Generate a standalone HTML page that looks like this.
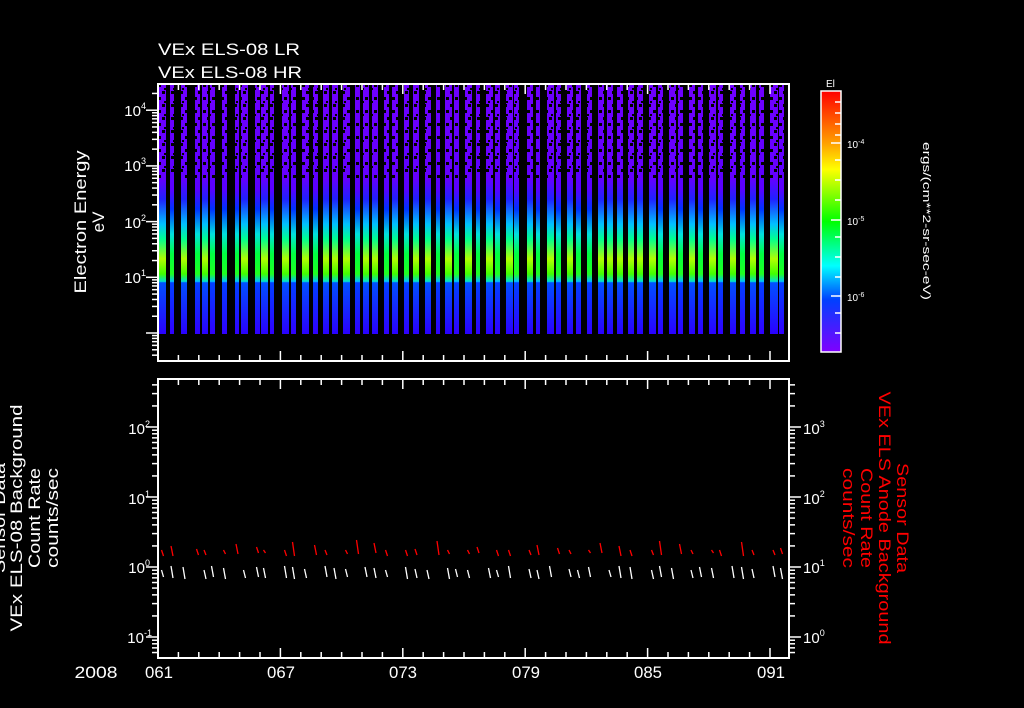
<!DOCTYPE html>
<html><head><meta charset="utf-8"><style>
html,body{margin:0;padding:0;background:#000;}
svg{display:block;}
text{font-family:"Liberation Sans",sans-serif;fill:#fff;}
</style></head><body>
<svg id="s" width="1024" height="708" viewBox="0 0 1024 708" xmlns="http://www.w3.org/2000/svg">
<defs>
<linearGradient id="gA" gradientUnits="userSpaceOnUse" x1="0" y1="84" x2="0" y2="334">
<stop offset="0" stop-color="#7000ff"/><stop offset="0.38" stop-color="#6400ff"/>
<stop offset="0.46" stop-color="#2020ff"/><stop offset="0.56" stop-color="#00c0ff"/>
<stop offset="0.62" stop-color="#00ff90"/><stop offset="0.70" stop-color="#b0ff00"/>
<stop offset="0.76" stop-color="#40ff00"/><stop offset="0.79" stop-color="#00e0d0"/>
<stop offset="0.795" stop-color="#0050ff"/><stop offset="1" stop-color="#2a00ff"/>
</linearGradient>
<linearGradient id="gB" gradientUnits="userSpaceOnUse" x1="0" y1="84" x2="0" y2="334">
<stop offset="0" stop-color="#7000ff"/><stop offset="0.42" stop-color="#5a00ff"/>
<stop offset="0.50" stop-color="#0030ff"/><stop offset="0.60" stop-color="#00e0e0"/>
<stop offset="0.68" stop-color="#00ff40"/><stop offset="0.76" stop-color="#20ff20"/>
<stop offset="0.79" stop-color="#00c0ff"/><stop offset="0.795" stop-color="#0040ff"/>
<stop offset="1" stop-color="#3000ff"/>
</linearGradient>
<linearGradient id="cb" x1="0" y1="0" x2="0" y2="1">
<stop offset="0" stop-color="#ff0000"/><stop offset="0.2" stop-color="#ffa000"/>
<stop offset="0.3" stop-color="#ffff00"/><stop offset="0.5" stop-color="#00ff00"/>
<stop offset="0.67" stop-color="#00ffff"/><stop offset="0.8" stop-color="#0040ff"/>
<stop offset="1" stop-color="#8000ff"/>
</linearGradient>
<pattern id="spk" width="9" height="13" patternUnits="userSpaceOnUse">
<rect x="0" y="0" width="3" height="3" fill="#000"/><rect x="5" y="6" width="3" height="3" fill="#000"/><rect x="2" y="10" width="2" height="2" fill="#000"/>
</pattern>
</defs>
<g id="stripes"></g>
<rect x="158" y="84" width="631" height="95" fill="url(#spk)"/>
<g fill="none" stroke="#fff" stroke-width="2">
<rect x="158" y="84" width="631" height="277"/>
<rect x="158" y="379" width="631" height="279"/>
<rect x="821" y="91" width="20" height="261" fill="url(#cb)" stroke-width="1.5"/>
</g>
<g id="ticks" stroke="#fff" stroke-width="1.5"></g>
<g id="segs" stroke-width="1.3" fill="none"></g>

<text x="158" y="55" font-size="17" textLength="142" lengthAdjust="spacingAndGlyphs">VEx ELS-08 LR</text>
<text x="158" y="78" font-size="17" textLength="144" lengthAdjust="spacingAndGlyphs">VEx ELS-08 HR</text>

<g font-size="15" text-anchor="end">
<text x="146" y="116">10<tspan font-size="9" dy="-7">4</tspan></text>
<text x="146" y="171">10<tspan font-size="9" dy="-7">3</tspan></text>
<text x="146" y="228">10<tspan font-size="9" dy="-7">2</tspan></text>
<text x="146" y="283">10<tspan font-size="9" dy="-7">1</tspan></text>
<text x="150" y="434">10<tspan font-size="9" dy="-7">2</tspan></text>
<text x="150" y="504">10<tspan font-size="9" dy="-7">1</tspan></text>
<text x="150" y="573">10<tspan font-size="9" dy="-7">0</tspan></text>
<text x="152" y="643">10<tspan font-size="9" dy="-7">-1</tspan></text>
</g>
<g font-size="15">
<text x="803" y="434">10<tspan font-size="9" dy="-7">3</tspan></text>
<text x="803" y="504">10<tspan font-size="9" dy="-7">2</tspan></text>
<text x="803" y="573">10<tspan font-size="9" dy="-7">1</tspan></text>
<text x="803" y="643">10<tspan font-size="9" dy="-7">0</tspan></text>
</g>
<g font-size="10">
<text x="847" y="148">10<tspan font-size="7" dy="-4">-4</tspan></text>
<text x="847" y="225">10<tspan font-size="7" dy="-4">-5</tspan></text>
<text x="847" y="301">10<tspan font-size="7" dy="-4">-6</tspan></text>
<text x="826" y="87">El</text>
</g>
<text transform="translate(923,221) rotate(90)" font-size="11" text-anchor="middle" textLength="158" lengthAdjust="spacingAndGlyphs">ergs/(cm**2-sr-sec-eV)</text>

<g font-size="17" text-anchor="middle">
<text x="96" y="678" textLength="43" lengthAdjust="spacingAndGlyphs">2008</text>
<text x="159" y="678" textLength="28" lengthAdjust="spacingAndGlyphs">061</text>
<text x="281" y="678" textLength="28" lengthAdjust="spacingAndGlyphs">067</text>
<text x="403" y="678" textLength="28" lengthAdjust="spacingAndGlyphs">073</text>
<text x="526" y="678" textLength="28" lengthAdjust="spacingAndGlyphs">079</text>
<text x="648" y="678" textLength="28" lengthAdjust="spacingAndGlyphs">085</text>
<text x="771" y="678" textLength="28" lengthAdjust="spacingAndGlyphs">091</text>
</g>

<g font-size="17" text-anchor="middle">
<text transform="translate(86,222) rotate(-90)" textLength="143" lengthAdjust="spacingAndGlyphs">Electron Energy</text>
<text transform="translate(104,222) rotate(-90)">eV</text>
<text transform="translate(5,518) rotate(-90)" textLength="110" lengthAdjust="spacingAndGlyphs">Sensor Data</text>
<text transform="translate(22,518) rotate(-90)" textLength="227" lengthAdjust="spacingAndGlyphs">VEx ELS-08 Background</text>
<text transform="translate(40,518) rotate(-90)" textLength="100" lengthAdjust="spacingAndGlyphs">Count Rate</text>
<text transform="translate(58,518) rotate(-90)" textLength="100" lengthAdjust="spacingAndGlyphs">counts/sec</text>
</g>
<g font-size="17" text-anchor="middle">
<text transform="translate(897,518) rotate(90)" style="fill:#f00" textLength="110" lengthAdjust="spacingAndGlyphs">Sensor Data</text>
<text transform="translate(879,518) rotate(90)" style="fill:#f00" textLength="253" lengthAdjust="spacingAndGlyphs">VEx ELS Anode Background</text>
<text transform="translate(861,518) rotate(90)" style="fill:#f00" textLength="100" lengthAdjust="spacingAndGlyphs">Count Rate</text>
<text transform="translate(843,518) rotate(90)" style="fill:#f00" textLength="100" lengthAdjust="spacingAndGlyphs">counts/sec</text>
</g>
</svg>
<script>
var NS="http://www.w3.org/2000/svg";
function el(p,t,a){var e=document.createElementNS(NS,t);for(var k in a)e.setAttribute(k,a[k]);p.appendChild(e);return e;}
var S=[[159,165],[170,173],[181,186],[195,199],[202,207],[210,214],[222,226],[235,238],[241,247],[255,259],[261,267],[270,273],[282,288],[291,295],[302,308],[313,317],[323,328],[332,337],[343,349],[355,359],[363,368],[372,377],[384,388],[392,397],[404,408],[413,418],[425,430],[436,439],[445,451],[454,458],[465,471],[476,479],[486,492],[495,499],[506,512],[514,518],[527,532],[536,539],[547,553],[556,560],[567,572],[576,580],[587,591],[598,603],[607,612],[617,622],[628,633],[637,642],[649,655],[658,662],[669,675],[678,682],[689,694],[698,702],[709,715],[718,722],[730,735],[740,744],[750,755],[759,763],[770,777],[779,783]];
var g=document.getElementById("stripes"),sg=document.getElementById("segs");
S.forEach(function(s,i){
 var w=s[1]-s[0]+1;
 el(g,"rect",{x:s[0],y:84,width:w,height:250,fill:(w>=6?"url(#gA)":"url(#gB)")});
 var x=s[0]+w/2, r=((i*37)%11);
 if(i%3!=2) el(sg,"line",{x1:x-1,y1:550-r*(i%2),x2:x+1,y2:556-(r%4),stroke:"#f00"});
 if(i%4!=3) el(sg,"line",{x1:x-1,y1:570-(r%5),x2:x+1,y2:577+(r%3),stroke:"#fff"});
});
var T=document.getElementById("ticks");
function ln(a,b,c,d){el(T,"line",{x1:a,y1:b,x2:c,y2:d});}
var L=[0.301,0.477,0.602,0.699,0.778,0.845,0.903,0.954];
for(var d=0;d<=31;d++){var x=158+d*20.4;if(x>789)break;var m=(d%6==0)?10:6;
 ln(x,361,x,361-m);ln(x,84,x,84+m);ln(x,658,x,658-m);ln(x,379,x,379+m);}
function logt(x,dir,y0,dec,ymin,ymax){for(var k=-3;k<8;k++){var base=y0-k*dec;
 if(base>=ymin&&base<=ymax)ln(x,base,x+dir*12,base);
 L.forEach(function(l){var y=base-l*dec;if(y>=ymin&&y<=ymax)ln(x,y,x+dir*6,y);});}}
logt(158,-1,333,55.7,84,361);
logt(158,-1,567,70,379,658);
logt(789,1,567,70,379,658);
[[143,10],[220,10],[296,10],[102,6],[113,6],[124,6],[135,6],[160,6],[180,6],[200,6],[237,6],[257,6],[277,6],[313,6],[333,6]].forEach(function(t){ln(841,t[0],841-t[1],t[0]);});
</script>
</body></html>
